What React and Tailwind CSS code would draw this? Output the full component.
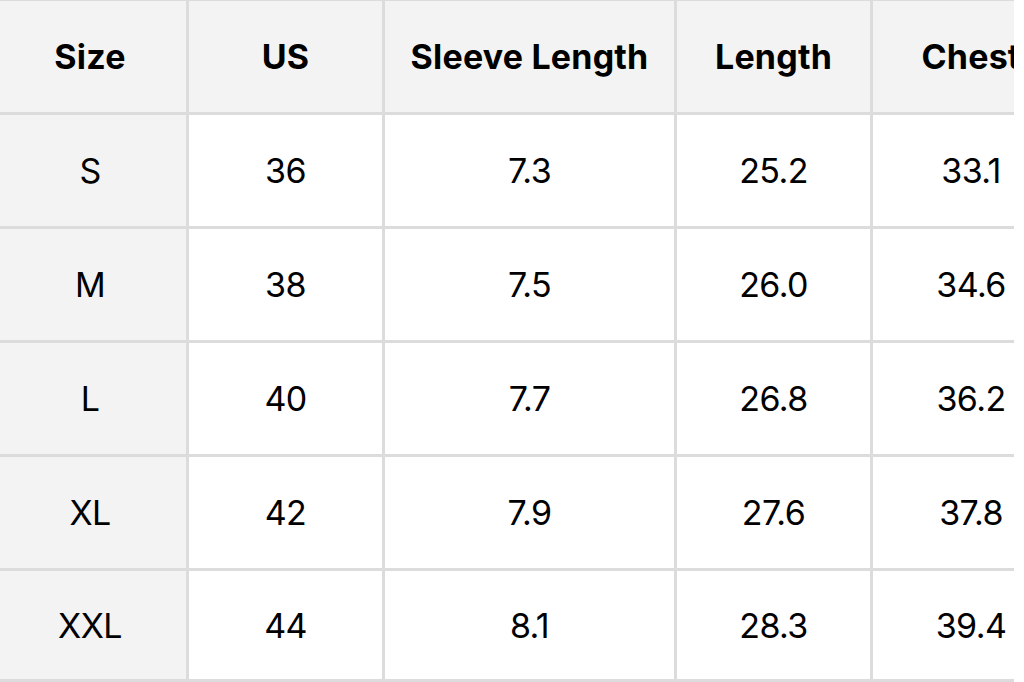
import React from "react";

const headers = ["Size", "US", "Sleeve Length", "Length", "Chest"];

const rows = [
  ["S", "36", "7.3", "25.2", "33.1"],
  ["M", "38", "7.5", "26.0", "34.6"],
  ["L", "40", "7.7", "26.8", "36.2"],
  ["XL", "42", "7.9", "27.6", "37.8"],
  ["XXL", "44", "8.1", "28.3", "39.4"],
];

export default function App() {
  return (
    <div className="w-[1024px] h-[682px] bg-white overflow-hidden" style={{ fontFamily: "Inter, 'Noto Sans', sans-serif" }}>
      <div className="w-[1014px] h-[682px] overflow-hidden bg-[#dcdcdc] pt-[1px] pb-[3px]">
        <div className="grid grid-cols-[186px_193px_289px_193px_196px] grid-rows-[111px_111px_111px_111px_111px_108px] gap-[3px] w-[1073px]">
          {headers.map((h, i) => (
            <div
              key={h}
              className={`${i === 0 ? "pr-[6px]" : ""} bg-[#f3f3f3] flex items-center justify-center text-[34px] font-bold text-black tracking-[0.2px]`}
            >
              {h}
            </div>
          ))}
          {rows.map((r) =>
            r.map((v, i) => (
              <div
                key={r[0] + i}
                className={`${i === 0 ? "bg-[#f3f3f3] pr-[6px]" : "bg-white"} flex items-center justify-center text-[34px] text-black tracking-[-0.6px]`}
              >
                {v}
              </div>
            ))
          )}
        </div>
      </div>
    </div>
  );
}
